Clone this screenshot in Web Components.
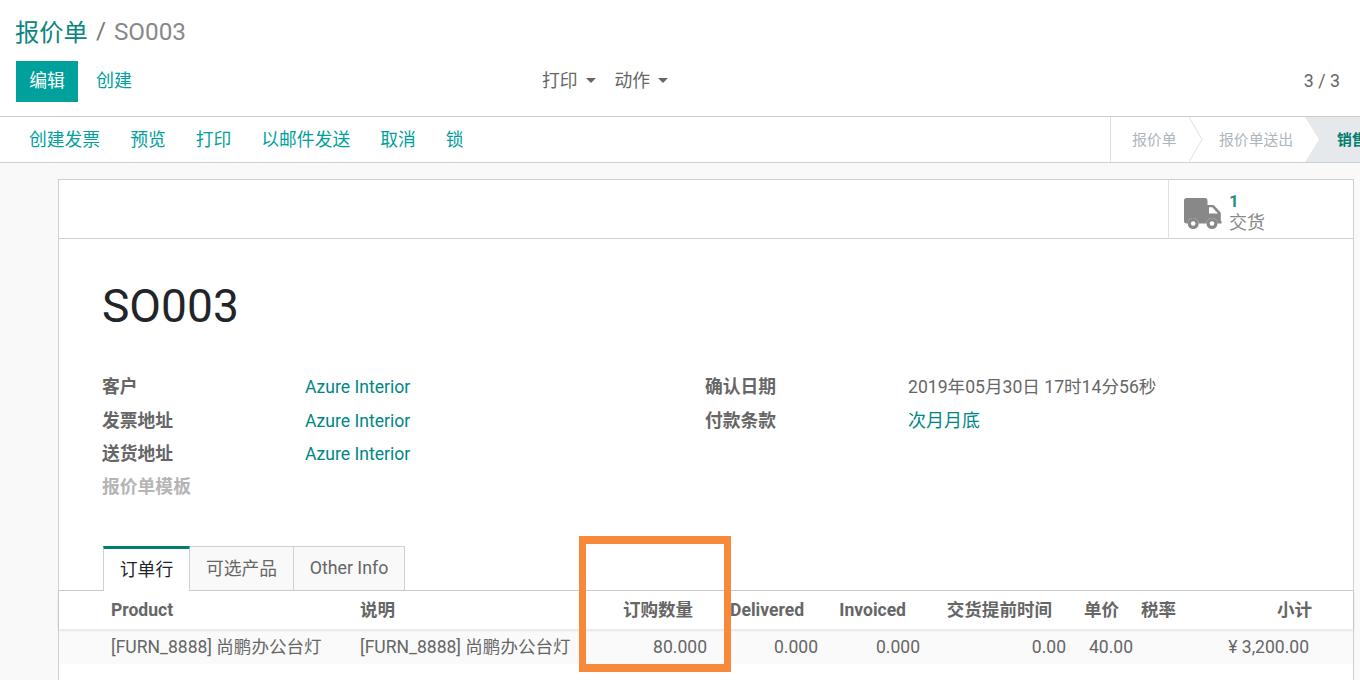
<!DOCTYPE html>
<html lang="zh">
<head>
<meta charset="utf-8">
<title>SO003</title>
<style>
  html, body { margin: 0; height: 680px; overflow: hidden; }
  body { font-family: Roboto, "Noto Sans CJK SC", sans-serif; font-size: 17.8px; color: #666; background: #fff; position: relative; }
</style>
</head>
<body>
<control-panel></control-panel>
<status-bar>
  <a>创建发票</a><a>预览</a><a>打印</a><a>以邮件发送</a><a>取消</a><a>锁</a>
</status-bar>
<form-sheet>
  <order-fields></order-fields>
  <order-tabs></order-tabs>
  <order-table></order-table>
</form-sheet>
<mark-box></mark-box>

<script>
class ControlPanel extends HTMLElement {
  constructor() {
    super();
    this.attachShadow({mode: 'open'});
    this.shadowRoot.innerHTML = `
    <style>
      :host { display: block; height: 116px; border-bottom: 1px solid #ccc; padding: 0 20px 0 15px; box-sizing: content-box; }
      .crumbs { height: 61px; display: flex; align-items: center; box-sizing: border-box; font-size: 24.3px; color: #888; }
      .crumbs a { color: #0a857f; }
      .crumbs span { margin: 0 8px 0 8px; color: #777; }
      .crumbs .id { margin: 0; color: #888; position: relative; top: 1px; }
      .row { display: grid; grid-template-columns: 527px 1fr auto; grid-template-rows: 41px; align-items: center; height: 41px; }
      .row > * { line-height: 37px; padding-bottom: 4px; }
      .left { display: flex; align-items: center; padding-bottom: 0 !important; }
      .edit { width: 62px; height: 41px; margin-left: 1px; background: #00a09d; color: #fff; display: flex; align-items: center; justify-content: center; padding-bottom: 3px; box-sizing: border-box; }
      .create { color: #00a09d; margin-left: 18px; padding-bottom: 3px; font-size: 18px; }
      .mid { display: flex; color: #666; padding-bottom: 3px; }
      .mid div { display: flex; align-items: center; margin-right: 19px; }
      .mid i { display: block; width: 0; height: 0; margin-left: 8px; margin-top: 1px; border: 5px solid transparent; border-top: 5px solid #666; border-bottom: 0; }
      .pager { color: #666; padding-bottom: 2px; }
    </style>
    <div class="crumbs"><a>报价单</a><span>/</span><span class="id">SO003</span></div>
    <div class="row">
      <div class="left"><div class="edit">编辑</div><div class="create">创建</div></div>
      <div class="mid"><div>打印<i></i></div><div>动作<i></i></div></div>
      <div class="pager">3 / 3</div>
    </div>`;
  }
}

class StatusBar extends HTMLElement {
  constructor() {
    super();
    this.attachShadow({mode: 'open'});
    this.shadowRoot.innerHTML = `
    <style>
      :host { display: flex; height: 45px; border-bottom: 1px solid #ccd1d6; justify-content: space-between; overflow: hidden; background: #fff; font-size: 17.8px; }
      .actions { display: flex; align-items: center; gap: 30px; padding: 0 0 3px 29px; color: #00a09d; }
      ::slotted(a) { color: #00a09d; }
      .steps { display: flex; width: 249px; flex: none; border-left: 1px solid #dee2e6; font-size: 14.85px; color: #adb5bd; }
      .step { display: flex; flex: none; align-items: center; position: relative; height: 45px; white-space: nowrap; padding-bottom: 3px; box-sizing: border-box; }
      .one { width: 78px; padding-left: 21px; }
      .two { width: 116px; padding-left: 30px; }
      .step svg { position: absolute; top: 0; right: -14px; }
      .cur { width: 120px; padding-left: 32px; color: #017e6e; font-weight: bold; background: #e6e9ec;
             clip-path: polygon(0 0, 100% 0, 100% 100%, 0 100%, 14px 50%); }
    </style>
    <div class="actions"><slot></slot></div>
    <div class="steps">
      <div class="step one">报价单
        <svg width="14" height="45"><path d="M0 0L13 22.5L0 45" fill="none" stroke="#dee2e6"/></svg>
      </div>
      <div class="step two">报价单送出</div>
      <div class="step cur">销售订单</div>
    </div>`;
  }
}

class FormSheet extends HTMLElement {
  constructor() {
    super();
    this.attachShadow({mode: 'open'});
    this.shadowRoot.innerHTML = `
    <style>
      :host { display: block; background: #f9f9f9; height: 518px; padding: 16px 6px 0 58px; overflow: hidden; }
      .sheet { background: #fff; border: 1px solid #ccd1d6; height: 600px; }
      .box { height: 58px; border-bottom: 1px solid #ccd1d6; display: flex; justify-content: flex-end; }
      .btn { width: 185px; border-left: 1px solid #dee2e6; display: flex; align-items: center; padding-left: 15px; box-sizing: border-box; height: 59px; }
      .btn svg { flex: none; margin-right: 7px; margin-top: 8px; }
      .val { color: #2a8f83; font-weight: bold; line-height: 18px; font-size: 17px; margin-top: 8px; }
      .lbl { color: #888; line-height: 24px; margin-top: 1px; font-size: 18px; }
      h1 { margin: 0; padding: 41px 0 0 43px; font-weight: normal; font-size: 46.1px; line-height: 52px; color: #212529; height: 69px; }
    </style>
    <div class="sheet">
      <div class="box">
        <div class="btn">
          <svg width="38" height="31" viewBox="0 0 38 31"><path fill="#888" d="M2.5 0H21a2.5 2.5 0 0 1 2.5 2.500V7h5.200a2 2 0 0 1 1.500.6l6 6.300a2 2 0 0 1 .6 1.400V23h.7v2.500H33.500a5.500 5.500 0 0 0-11 0h-7.800a5.500 5.500 0 0 0-11 0H2.500A2.500 2.500 0 0 1 0 23V2.500A2.500 2.500 0 0 1 2.500 0z"/><path fill="#fff" d="M25 9.300h3.300l5.700 6.200H25z"/><circle cx="9.200" cy="25.500" r="5.500" fill="#888"/><circle cx="28" cy="25.500" r="5.500" fill="#888"/><circle cx="9.200" cy="25.500" r="2.300" fill="#fff"/><circle cx="28" cy="25.500" r="2.300" fill="#fff"/></svg>
          <div><div class="val">1</div><div class="lbl">交货</div></div>
        </div>
      </div>
      <h1>SO003</h1>
      <slot></slot>
    </div>`;
  }
}

class OrderFields extends HTMLElement {
  constructor() {
    super();
    this.attachShadow({mode: 'open'});
    this.shadowRoot.innerHTML = `
    <style>
      :host { display: grid; grid-template-columns: 603px 1fr; padding: 21.4px 0 0 43px; line-height: 33.2px; height: 166.6px; }
      .col { display: grid; grid-template-columns: 203px 1fr; grid-auto-rows: 33.2px; align-content: start; }
      b { color: #666; }
      b.off { color: #b5b5b5; }
      a { color: #008784; font-size: 17.6px; padding-top: 1px; line-height: 32.2px; }
      a.zh { font-size: 18px; }
      span { font-size: 17.6px; padding-top: 1px; line-height: 32.2px; }
    </style>
    <div class="col">
      <b>客户</b><a>Azure Interior</a>
      <b>发票地址</b><a>Azure Interior</a>
      <b>送货地址</b><a>Azure Interior</a>
      <b class="off">报价单模板</b><span></span>
    </div>
    <div class="col">
      <b>确认日期</b><span>2019年05月30日 17时14分56秒</span>
      <b>付款条款</b><a class="zh">次月月底</a>
    </div>`;
  }
}

class OrderTabs extends HTMLElement {
  constructor() {
    super();
    this.attachShadow({mode: 'open'});
    this.shadowRoot.innerHTML = `
    <style>
      :host { display: flex; height: 44px; padding-left: 44px; border-bottom: 1px solid #ccd1d6; margin-top: 9px; }
      div { height: 44px; box-sizing: border-box; display: flex; align-items: center; justify-content: center; border: 1px solid #ccd1d6; border-left: 0; border-bottom: 0; background: #f9f9f9; color: #666; padding-bottom: 3px; }
      .on { width: 87px; height: 45px; background: #fff; color: #212529; border-top: 3px solid #017e6e; border-left: 1px solid #ccd1d6; position: relative; z-index: 1; padding-bottom: 3px; }
      .b { width: 104px; }
      .c { width: 111px; padding-bottom: 2px; }
    </style>
    <div class="on">订单行</div><div class="b">可选产品</div><div class="c">Other Info</div>`;
  }
}

class OrderTable extends HTMLElement {
  constructor() {
    super();
    this.attachShadow({mode: 'open'});
    this.shadowRoot.innerHTML = `
    <style>
      :host { display: block; font-size: 17.55px; }
      .r { display: grid; grid-template-columns: 249px 230px 117px 111px 102px 146px 67px 60px 116px; padding-left: 52px; white-space: nowrap; align-items: baseline; box-sizing: border-box; }
      .h { height: 38px; padding-top: 5px; font-weight: bold; box-shadow: 0 1px 3px rgba(0,0,0,.14); position: relative; }
      .d { height: 34px; padding-top: 3px; background: #fafafa; margin-top: 1px; }
      .n { text-align: right; }
      .h .n { padding-right: 14px; }
      .h .t { padding-left: 8px; }
      .h .s { padding-right: 0; margin-right: -3px; }
    </style>
    <div class="r h">
      <div>Product</div><div>说明</div><div class="n">订购数量</div><div class="n">Delivered</div><div class="n">Invoiced</div><div class="n">交货提前时间</div><div class="n">单价</div><div class="t">税率</div><div class="n s">小计</div>
    </div>
    <div class="r d">
      <div>[FURN_8888] 尚鹏办公台灯</div><div>[FURN_8888] 尚鹏办公台灯</div><div class="n">80.000</div><div class="n">0.000</div><div class="n">0.000</div><div class="n">0.00</div><div class="n">40.00</div><div></div><div class="n">¥ 3,200.00</div>
    </div>`;
  }
}

// the orange highlight drawn over the screenshot
class MarkBox extends HTMLElement {
  constructor() {
    super();
    this.attachShadow({mode: 'open'});
    this.shadowRoot.innerHTML = `
    <style>
      :host { position: absolute; left: 579px; top: 536px; width: 152px; height: 136px; box-sizing: border-box; border: 7px solid #f78a3a; border-top-width: 8px; border-bottom-width: 8px; }
    </style>`;
  }
}

customElements.define('control-panel', ControlPanel);
customElements.define('status-bar', StatusBar);
customElements.define('form-sheet', FormSheet);
customElements.define('order-fields', OrderFields);
customElements.define('order-tabs', OrderTabs);
customElements.define('order-table', OrderTable);
customElements.define('mark-box', MarkBox);
</script>
</body>
</html>
